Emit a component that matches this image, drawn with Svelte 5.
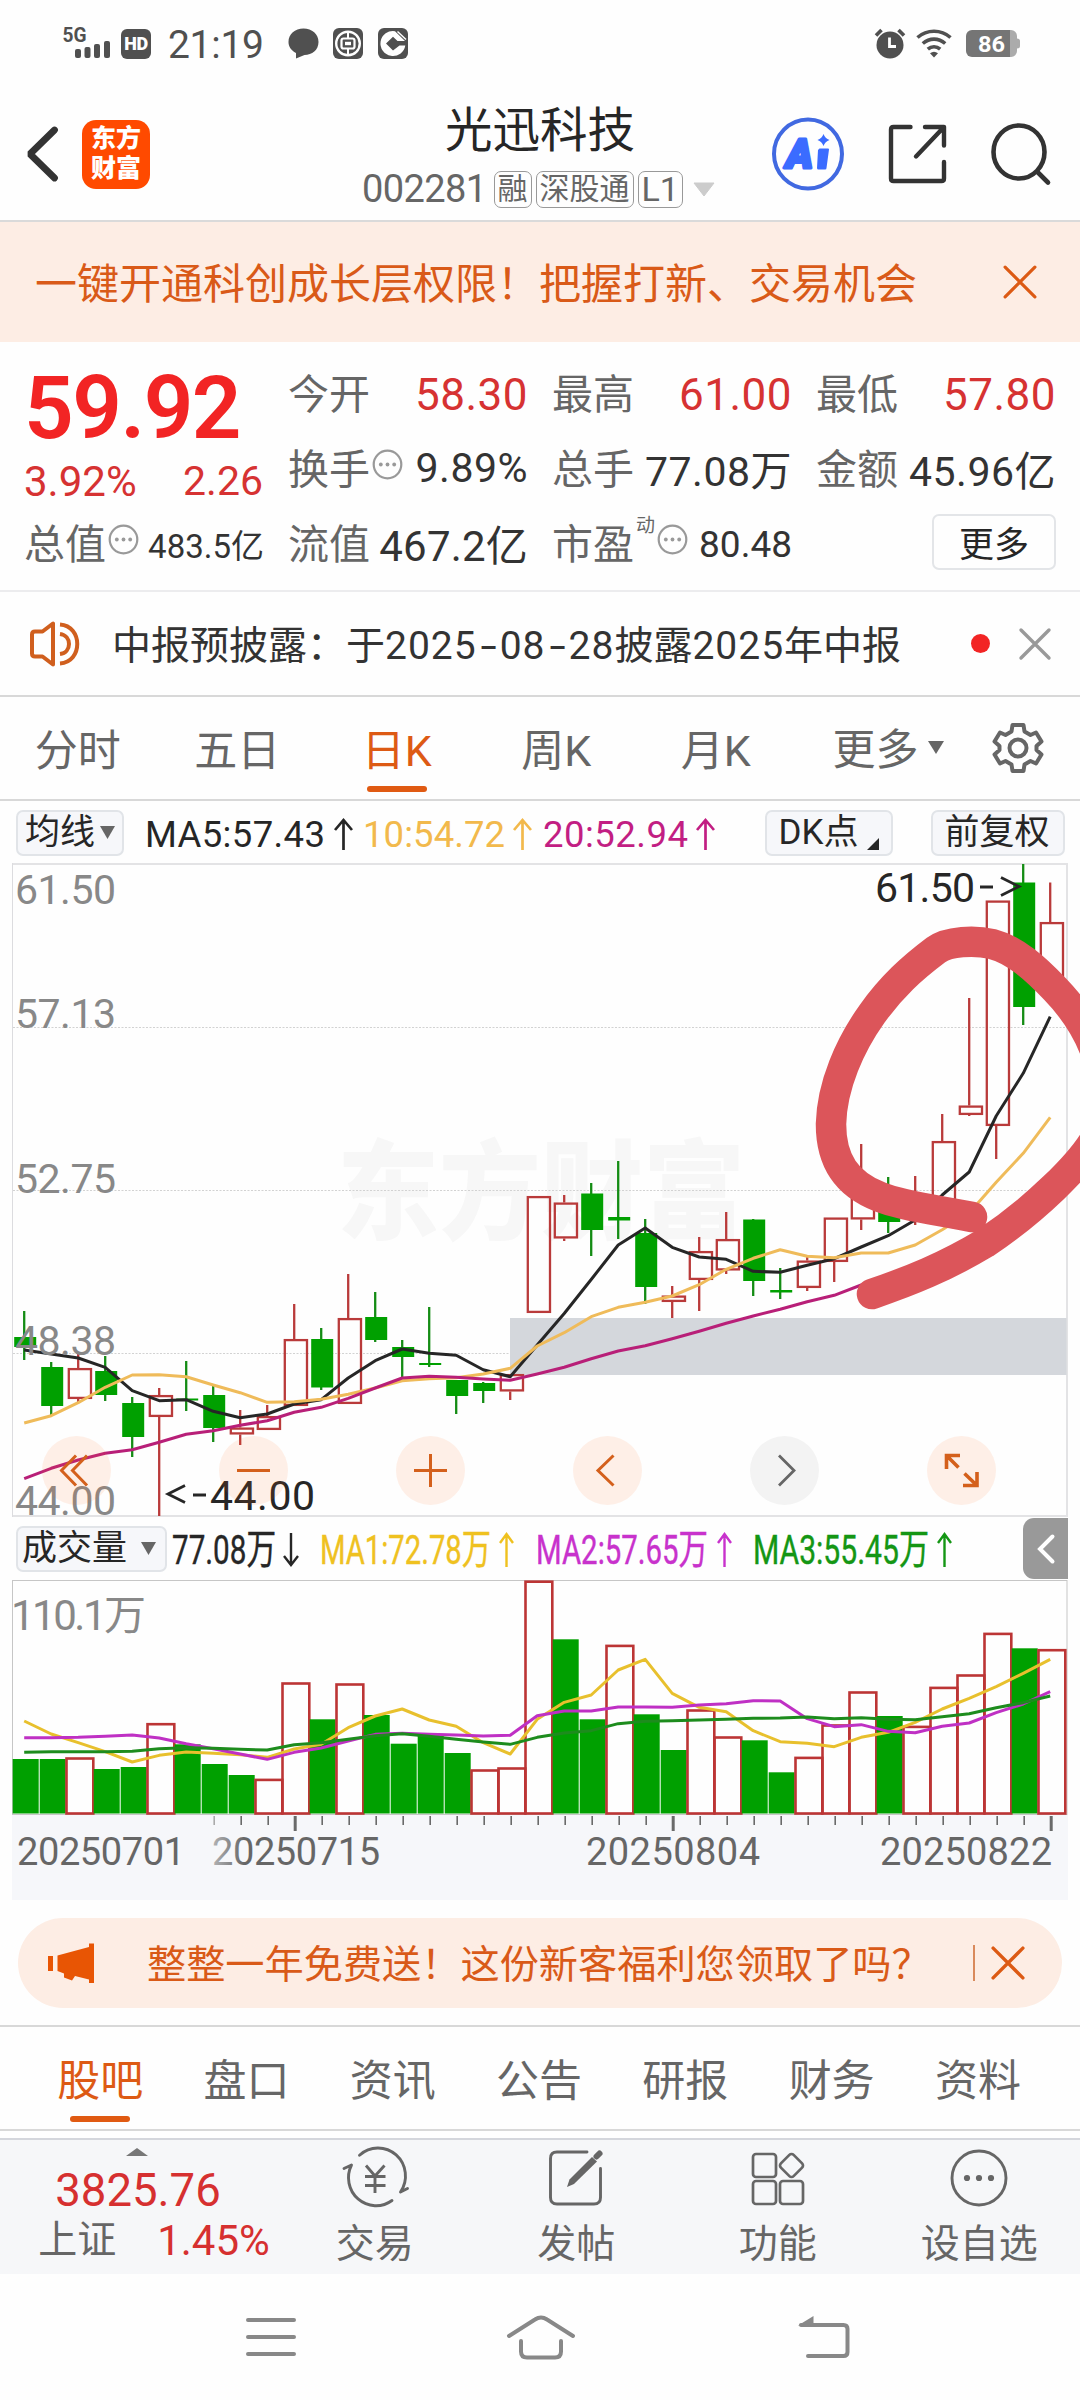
<script>
  const STEP = 27;
  const cx = (i) => 24.2 + i * STEP;

  // [rising, high, low, bodyTop, bodyBottom] in chart units
  const candles = [
    [0, 1311, 1360, 1337, 1347], [0, 1362, 1415, 1367, 1406], [1, 1353, 1402, 1368, 1399],
    [0, 1356, 1401, 1371, 1395], [0, 1397, 1457, 1403, 1437], [1, 1388, 1516, 1395, 1417],
    [0, 1361, 1411, 1398.5, 1400.5], [0, 1385, 1442, 1395, 1428], [1, 1410, 1445, 1427.5, 1434.5],
    [1, 1405, 1429, 1416, 1430], [1, 1304, 1406, 1339, 1406], [0, 1328, 1390, 1339, 1387.5],
    [1, 1274, 1404, 1318, 1404], [0, 1292, 1342, 1317, 1340], [0, 1340, 1378, 1347, 1357],
    [0, 1307, 1367, 1363, 1365], [0, 1380, 1414, 1380, 1396], [0, 1382, 1403, 1383, 1391],
    [1, 1374, 1400, 1374, 1391.5], [1, 1196, 1313, 1196, 1313], [1, 1195, 1241, 1202.5, 1238.5],
    [0, 1183, 1256, 1193.5, 1230], [0, 1161, 1239, 1217, 1220.5], [0, 1219, 1304, 1233, 1287],
    [1, 1286, 1318, 1295.5, 1302], [1, 1237, 1311, 1251, 1280], [1, 1212, 1274, 1239, 1270.5],
    [0, 1219, 1296, 1219.5, 1281], [0, 1268, 1299, 1290, 1292.5], [1, 1257, 1291, 1260.5, 1288],
    [1, 1217.5, 1282, 1217.5, 1262], [1, 1144, 1230, 1196, 1219.5], [0, 1177, 1233, 1205, 1222],
    [1, 1176, 1225, 1198, 1212], [1, 1114, 1201, 1141, 1201], [1, 998, 1116, 1105.5, 1115],
    [1, 900.5, 1159, 900.5, 1126], [0, 864, 1025, 882.5, 1007], [1, 882.5, 987, 922, 987]
  ];

  const ma5 = [1350, 1354, 1358, 1367.3, 1390.7, 1400.7, 1399.7, 1411.3, 1417.7, 1414, 1404, 1399.7, 1378, 1360.7, 1349, 1353.3, 1355.3, 1369.7, 1376.7, 1345, 1313.5, 1279.5, 1245, 1228, 1247.3, 1257, 1259.3, 1271.3, 1272.3, 1265.3, 1258.7, 1247, 1235.7, 1220, 1195, 1172, 1116, 1073.3, 1016.7];
  const ma10 = [1423, 1415.7, 1402.7, 1387.3, 1375, 1374.7, 1376.7, 1385, 1392.7, 1402.3, 1401.7, 1399.3, 1394.3, 1388, 1380.7, 1378.7, 1377.7, 1374, 1368.3, 1346, 1332.7, 1316.7, 1307.3, 1302.3, 1296, 1284.7, 1269.3, 1258.3, 1249.7, 1256.3, 1257.7, 1253, 1253, 1245, 1229.7, 1213, 1182.3, 1153.3, 1117.3];
  const ma20 = [1478.7, 1468.3, 1460, 1453.3, 1449.7, 1442.3, 1434.3, 1430.7, 1425.3, 1420.7, 1412.3, 1407.3, 1398.3, 1388, 1378, 1376.3, 1377.3, 1379, 1380.3, 1374, 1367.3, 1358.7, 1351, 1345.7, 1338.7, 1331.3, 1323.3, 1316, 1309.3, 1301.7, 1295.3, 1285, 1277];

  // [rising, top]
  const volumes = [
    [0, 1759], [0, 1759], [1, 1757.3], [0, 1769], [0, 1767], [1, 1723], [0, 1744.3], [0, 1764], [0, 1775], [1, 1778.7],
    [1, 1682.3], [0, 1719.3], [1, 1683.3], [0, 1715], [0, 1743.7], [0, 1736], [0, 1753], [1, 1769.3], [1, 1767.3], [1, 1580.5],
    [0, 1639.3], [0, 1719.3], [1, 1644.7], [0, 1714.3], [0, 1750], [1, 1709.3], [1, 1736.3], [0, 1740.3], [0, 1772.3], [1, 1756.7],
    [1, 1724.3], [1, 1691.3], [0, 1716], [1, 1725.7], [1, 1686.7], [1, 1674.3], [1, 1632.7], [0, 1648.3], [1, 1649]
  ];
  const vma = (offsets) => offsets.map((o) => 1560 + o / 3);
  const v1 = vma([483, 522, 548, 575, 606, 586, 576, 580, 584, 592, 567, 553, 503, 468, 447, 480, 499, 548, 582, 478, 427, 405, 330, 298, 400, 442, 455, 512, 545, 550, 560, 532, 517, 487, 447, 415, 380, 340, 298]);
  const v2 = vma([533, 533, 532, 529, 525, 534, 551, 566, 582, 598, 577, 564, 543, 523, 520, 523, 525, 528, 526, 467, 453, 453, 441, 441, 442, 435, 431, 422, 423, 476, 500, 494, 514, 518, 499, 489, 458, 432, 395]);
  const v3 = vma([577, 575, 575, 575, 574, 566, 563, 565, 568, 570, 554, 548, 538, 527, 521, 529, 538, 546, 553, 532, 519, 512, 491, 484, 482, 480, 478, 475, 474, 471, 476, 473, 478, 479, 470, 461, 443, 428, 408]);

  const line = (ys) => ys.map((y, i) => `${cx(i)},${y}`).join(' ');

  const periodTabs = ['分时', '五日', '日K', '周K', '月K'];
  const infoTabs = ['股吧', '盘口', '资讯', '公告', '研报', '财务', '资料'];
  const priceLabels = [['61.50', 903.5], ['57.13', 1028], ['52.75', 1192.5], ['48.38', 1355], ['44.00', 1514.5]];
  const gridYs = [1027.5, 1190.5, 1353.5];
  const ticks = Array.from({ length: 32 }, (_, k) => k + 7);
  const bigTicks = [10, 24, 38];
  const priceLegend = [
    ['MA5:57.43', 145, 180, 335, '#262626'],
    ['10:54.72', 363, 142, 514, '#f2b94c'],
    ['20:52.94', 543, 145, 697, '#c21e83']
  ];
  const volumeLegend = [
    ['77.08万', 172, 104, 284, '#262626', true],
    ['MA1:72.78万', 320, 171, 500, '#efc11f', false],
    ['MA2:57.65万', 536, 172, 718, '#c832cc', false],
    ['MA3:55.45万', 753, 176, 938, '#149614', false]
  ];
</script>

{#snippet dots()}
  <svg class="dots" width="31" height="31" viewBox="0 0 31 31">
    <circle cx="15.5" cy="15.5" r="13.8" fill="none" stroke="#999" stroke-width="2.2" />
    <circle cx="8.8" cy="15.5" r="1.9" fill="#999" /><circle cx="15.5" cy="15.5" r="1.9" fill="#999" /><circle cx="22.2" cy="15.5" r="1.9" fill="#999" />
  </svg>
{/snippet}

{#snippet cross(size, color, w)}
  <svg width={size} height={size} viewBox="0 0 32 32">
    <path d="M2 2 30 30M30 2 2 30" stroke={color} stroke-width={w} fill="none" stroke-linecap="round" />
  </svg>
{/snippet}

<div class="screen">
  <div class="status">
    <svg class="signal" width="50" height="44" viewBox="62 20 50 44">
      <text x="62.5" y="41.5" font-size="19.5" font-weight="700" fill="#505050" textLength="24" lengthAdjust="spacingAndGlyphs">5G</text>
      <g fill="#505050">
        <rect x="75" y="49" width="6" height="9" rx="2" /><rect x="84.5" y="47" width="6" height="11" rx="2" />
        <rect x="94" y="44" width="6" height="14" rx="2" /><rect x="104" y="41" width="6" height="17" rx="2" />
      </g>
    </svg>
    <span class="hd">HD</span>
    <span class="clock">21:19</span>
    <svg class="chat" width="31" height="31" viewBox="0 0 31 31">
      <path d="M15.5 .5C24 .5 30.500 6 30.500 14S24 27 16.500 27L8 30.500V25C3 22.500.5 18.500.5 14 .5 6 7 .5 15.500.5Z" fill="#505050" />
    </svg>
    <svg class="bank" width="30" height="31" viewBox="0 0 30 31">
      <rect width="30" height="31" rx="6" fill="#505050" />
      <circle cx="15" cy="15.500" r="11.800" fill="none" stroke="#fff" stroke-width="2.400" />
      <rect x="8.500" y="10.500" width="13" height="10" rx="2" fill="none" stroke="#fff" stroke-width="2.200" />
      <path d="M15 4v6.500M15 20.500V27" stroke="#fff" stroke-width="2" />
      <rect x="12" y="13.800" width="6" height="3.400" fill="#fff" />
    </svg>
    <svg width="30" height="31" viewBox="0 0 30 31">
      <rect width="30" height="31" rx="6" fill="#505050" />
      <path d="M17 3.200A12.500 12.500 0 1 0 27.300 17.500H21.500L15 22.500 8 15.500 15 8.800 19.500 13H27L17 3.200Z" fill="#fff" />
      <path d="M19.500 3.500 28 11.500" stroke="#fff" stroke-width="1.500" />
    </svg>
    <div class="status-right">
      <svg width="30" height="31" viewBox="0 0 30 31">
        <circle cx="15" cy="17" r="13.500" fill="#505050" />
        <path d="M1 7.500 6.500 2M29 7.500 23.500 2" stroke="#505050" stroke-width="3.600" />
        <path d="M14.500 9.500v9H21" fill="none" stroke="#fff" stroke-width="2.800" />
      </svg>
      <svg width="36" height="29" viewBox="0 0 36 29" fill="none" stroke="#505050" stroke-width="3.600">
        <path d="M1.500 8.500C11 .2 25 .2 34.500 8.500" /><path d="M6.800 14.500C13.500 8.700 22.500 8.700 29.200 14.500" /><path d="M11.800 20.200C15.500 17 20.500 17 24.200 20.200" />
        <path d="M14 24.200q4-3 8 0l-4 4.300Z" fill="#505050" stroke="none" />
      </svg>
      <svg width="54" height="27" viewBox="0 0 54 27">
        <path d="M40 0h5a6 6 0 0 1 6 6v2.500q3 0 3 2.500v5q0 2.500-3 2.500V21a6 6 0 0 1-6 6h-5Z" fill="#ababab" />
        <path d="M6 0H44V27H6a6 6 0 0 1-6-6V6A6 6 0 0 1 6 0Z" fill="#757575" />
        <text x="12" y="21.500" font-size="22" font-weight="700" fill="#fff" textLength="27" lengthAdjust="spacingAndGlyphs">86</text>
      </svg>
    </div>
  </div>

  <header>
    <div class="head-left">
      <svg width="33" height="56" viewBox="0 0 33 56"><path d="M28.500 4 4 28 28.500 52" fill="none" stroke="#333" stroke-width="6.800" stroke-linecap="round" stroke-linejoin="bevel" /></svg>
      <div class="logo"><span>东方</span><span>财富</span></div>
    </div>
    <div class="head-mid">
      <h1>光迅科技</h1>
      <div class="sub">
        <span class="code">002281</span><span class="tag">融</span><span class="tag">深股通</span><span class="tag l1">L1</span>
        <svg width="22" height="15" viewBox="0 0 22 15"><path d="M1 1H21L11 14Z" fill="#ccc" stroke="#ccc" stroke-linejoin="round" /></svg>
      </div>
    </div>
    <div class="head-right">
      <svg width="72" height="74" viewBox="0 0 72 74">
        <ellipse cx="36" cy="37" rx="34" ry="34.500" fill="none" stroke="#4169e1" stroke-width="4" />
        <text x="14" y="50.500" font-size="41" font-weight="900" font-style="italic" fill="#3b6cff" stroke="#3b6cff" stroke-width="3" stroke-linejoin="round" textLength="27" lengthAdjust="spacingAndGlyphs">A</text>
        <path d="M47.500 31.500h8.500q1 0 1 1L54.500 51q0 1.500-1.500 1.500h-6.500q-1.500 0-1.500-1.500L46 33Z" fill="#3b6cff" />
        <path d="M51.500 17q1.600 4.400 6 6-4.400 1.600-6 6-1.600-4.400-6-6 4.400-1.600 6-6Z" fill="#3b6cff" />
      </svg>
      <svg width="59" height="60" viewBox="0 0 59 60" fill="none" stroke="#333" stroke-width="4.400" stroke-linecap="round" stroke-linejoin="round">
        <path d="M22.500 3H5.500Q3 3 3 5.500V54.500Q3 57 5.500 57H53.500Q56 57 56 54.500V38" /><path d="M37 3H56V21.500M56 3 28 32.500" />
      </svg>
      <svg width="60" height="62" viewBox="0 0 60 62" fill="none" stroke="#333" stroke-width="4.600" stroke-linecap="round">
        <ellipse cx="28" cy="29" rx="25.500" ry="26.500" /><path d="M46.500 49 57 59.500" />
      </svg>
    </div>
  </header>

  <div class="banner">
    <span>一键开通科创成长层权限！把握打新、交易机会</span>
    {@render cross(34, '#dc5a14', 3)}
  </div>

  <section class="quote">
    <div class="col first">
      <div class="price">59.92</div>
      <div class="change"><span>3.92%</span><span class="diff">2.26</span></div>
      <div class="cell"><span class="label">总值</span>{@render dots()}<b class="v33">483.5亿</b></div>
    </div>
    <div class="col">
      <div class="cell"><span class="label">今开</span><b class="red">58.30</b></div>
      <div class="cell"><span class="label">换手</span>{@render dots()}<b>9.89%</b></div>
      <div class="cell"><span class="label">流值</span><b class="v42">467.2亿</b></div>
    </div>
    <div class="col">
      <div class="cell"><span class="label">最高</span><b class="red">61.00</b></div>
      <div class="cell"><span class="label">总手</span><b>77.08万</b></div>
      <div class="cell"><span class="label">市盈</span><i>动</i>{@render dots()}<b class="v37">80.48</b></div>
    </div>
    <div class="col">
      <div class="cell"><span class="label">最低</span><b class="red">57.80</b></div>
      <div class="cell"><span class="label">金额</span><b>45.96亿</b></div>
      <div class="cell"><button class="more">更多</button></div>
    </div>
  </section>

  <div class="notice">
    <svg width="52" height="46" viewBox="0 0 52 46" fill="none" stroke="#d05f1e" stroke-width="4" stroke-linejoin="round">
      <path d="M24 2.500V43.500L13.500 35.500H6Q3 35.500 3 32.500V13.500Q3 10.500 6 10.500H13.500Z" />
      <path d="M31 3.500C54 5 54 41 31 42.500M31 13C43 14.500 43 31.500 31 33" />
    </svg>
    <span class="msg">中报预披露：于<em>2025</em><s>-</s><em>08</em><s>-</s><em>28</em>披露<em>2025</em>年中报</span>
    <span class="dot"></span>
    {@render cross(32, '#999', 3.4)}
  </div>

  <nav class="periods">
    {#each periodTabs as tab, i}
      <span class="tab" class:active={i === 2}>{tab}</span>
    {/each}
    <span class="drop">更多<svg width="16" height="13" viewBox="0 0 16 13"><path d="M0 0H16L8 13Z" fill="#666" /></svg></span>
    <svg class="gear" width="52" height="52" viewBox="0 0 52 52" fill="none" stroke="#666" stroke-width="4">
      <path stroke-linejoin="round" d="M20.500 3H31.500L32.500 9.500 38.500 13 44 10.500 49.500 19.500 44.500 24V28L49.500 32.500 44 41.500 38.500 39 32.500 42.500 31.500 49H20.500L19.500 42.500 13.500 39 8 41.500 2.500 32.500 7.500 28V24L2.500 19.500 8 10.500 13.500 13 19.500 9.500Z" />
      <circle cx="26" cy="26" r="8.500" />
    </svg>
  </nav>

  <div class="legend">
    <button class="chip ma">均线<svg width="15" height="13" viewBox="0 0 15 13"><path d="M0 0H15L7.500 13Z" fill="#666" /></svg></button>
    <svg width="606" height="62" viewBox="124 801 606 62">
      {#each priceLegend as [text, x, w, ax, color]}
        <text {x} y="845.500" font-size="36.500" fill={color} textLength={w}>{text}</text>
        <path d="M{ax + 8.500} 849V819M{ax} 829 {ax + 8.500} 819 {ax + 17} 829" fill="none" stroke={color} stroke-width="2.700" />
      {/each}
    </svg>
    <button class="chip dk">DK点<svg width="12" height="12" viewBox="0 0 12 12"><path d="M12 0V12H0Z" fill="#262626" /></svg></button>
    <button class="chip fq">前复权</button>
  </div>

  <svg class="chart" width="1080" height="654" viewBox="0 863 1080 654">
    <text x="337" y="1231" font-size="108" font-weight="900" fill="#f7f7f7" textLength="408" lengthAdjust="spacingAndGlyphs">东方财富</text>
    {#each gridYs as y}
      <path d="M13 {y}H1067" stroke="#d2d2d2" stroke-width="1" stroke-dasharray="2 1.500" />
    {/each}
    <path d="M12 864H1067V1516H12" fill="none" stroke="#e3e3e5" stroke-width="2" /><path d="M12.500 863V1517" stroke="#dcdcdf" stroke-width="1" />
    <rect x="510" y="1318" width="556.500" height="57" fill="#d4d7dc" />
    {#each candles as [up, high, low, top, bottom], i}
      {#if up}
        <path d="M{cx(i)} {high}V{top}M{cx(i)} {bottom}V{low}" stroke="#b93a3a" stroke-width="2.300" />
        <rect x={cx(i) - 9.400} y={top + 1.100} width="22.200" height={bottom - top - 2.200} fill="none" stroke="#b93a3a" stroke-width="2.300" />
      {:else}
        <path d="M{cx(i)} {high}V{low}" stroke="#148c14" stroke-width="2.300" />
        <rect x={cx(i) - 10} y={top} width="22" height={bottom - top} fill="#00a000" />
      {/if}
    {/each}
    <g fill="none" stroke-width="3" stroke-linejoin="round">
      <polyline points={line(ma5)} stroke="#262626" />
      <polyline points={line(ma10)} stroke="#efbb5a" />
      <polyline points={line(ma20)} stroke="#b81f78" />
    </g>
    {#each priceLabels as [label, y]}
      <text x="15" {y} font-size="41" fill="#888" textLength="101">{label}</text>
    {/each}
    <text x="875" y="901.500" font-size="41" fill="#262626" textLength="100">61.50</text>
    <path d="M980 887H993" stroke="#262626" stroke-width="3" /><path d="M1001 877.500 1019 886.500 1001 895.500" stroke="#262626" stroke-width="2.800" fill="none" />
    <path d="M185 1485.500 168 1494 185 1502.500" stroke="#262626" stroke-width="2.800" fill="none" /><path d="M193 1495H206" stroke="#262626" stroke-width="3" />
    <text x="210" y="1509.500" font-size="41" fill="#262626" textLength="105">44.00</text>

    <g fill="#ff6a1e" fill-opacity=".1">
      <circle cx="76.500" cy="1470.500" r="34.500" /><circle cx="253.500" cy="1470.500" r="34.500" /><circle cx="430.500" cy="1470.500" r="34.500" />
      <circle cx="607.500" cy="1470.500" r="34.500" /><circle cx="961.500" cy="1470.500" r="34.500" />
    </g>
    <circle cx="784.500" cy="1470.500" r="34.500" fill="#f3f3f3" />
    <g fill="none" stroke="#d4601c" stroke-width="3">
      <path d="M76 1455.500 61.500 1470.500 76 1485.500M87 1455.500 72.500 1470.500 87 1485.500" />
      <path d="M237 1470.500H270M414 1470.500H447M430.500 1454V1487" />
      <path d="M613.500 1455.500 598 1470.500 613.500 1485.500" />
      <path d="M960 1455.500H946.500V1469M946.500 1455.500 958.500 1467.500M977 1472V1485.500H963M977 1485.500 964.500 1473.500" stroke-width="3.600" />
    </g>
    <path d="M779 1455.500 794 1470.500 779 1485.500" fill="none" stroke="#666" stroke-width="2.800" />

    <path d="M972 1217C945 1211 905 1207 880 1197C846 1184 831 1160 831 1124C832 1085 850 1045 872 1014C892 986 912 968 936 950C948 941 975 940 992 944C1015 950 1035 968 1055 989C1085 1020 1115 1070 1100 1130C1085 1163 1030 1213 985 1243C945 1267 910 1281 872 1294" fill="none" stroke="#dc555a" stroke-width="30.500" stroke-linecap="round" stroke-linejoin="round" />
  </svg>

  <div class="vlegend">
    <button class="chip vol">成交量<svg width="15" height="13" viewBox="0 0 15 13"><path d="M0 0H15L7.500 13Z" fill="#666" /></svg></button>
    <svg width="856" height="63" viewBox="167 1517 856 63">
      {#each volumeLegend as [text, x, w, ax, color, down]}
        <text {x} y="1563.500" font-size="40.500" fill={color} stroke={color} stroke-width=".4" textLength={w} lengthAdjust="spacingAndGlyphs">{text}</text>
        {#if down}
          <path d="M{ax + 7} 1533V1565M{ax} 1556 {ax + 7} 1565 {ax + 14} 1556" fill="none" stroke={color} stroke-width="2.400" />
        {:else}
          <path d="M{ax + 6.500} 1567V1534M{ax} 1543 {ax + 6.500} 1534 {ax + 13} 1543" fill="none" stroke={color} stroke-width="2.400" />
        {/if}
      {/each}
    </svg>
    <div class="handle"><svg width="18" height="30" viewBox="0 0 18 30"><path d="M15.500 2.500 3 15 15.500 27.500" fill="none" stroke="#fff" stroke-width="4" stroke-linecap="round" /></svg></div>
  </div>

  <svg class="chart" width="1080" height="320" viewBox="0 1580 1080 320">
    <defs>
      <linearGradient id="fade" gradientUnits="userSpaceOnUse" x1="208" y1="0" x2="245" y2="0">
        <stop offset="0" stop-color="#666" stop-opacity=".4" /><stop offset="1" stop-color="#666" />
      </linearGradient>
    </defs>
    <rect x="12.500" y="1580.500" width="1054.500" height="234" fill="none" stroke="#c6c6c6" />
    <text x="11" y="1630" font-size="42" fill="#888" textLength="135">110.1万</text>
    {#each volumes as [up, top], i}
      {#if up}
        <rect x={12.500 + i * STEP} y={top + 1.200} width="26.800" height={1812.300 - top} fill="none" stroke="#bc3535" stroke-width="2.600" />
      {:else}
        <rect x={12.700 + i * STEP} y={top} width="26" height={1813.500 - top} fill="#00a000" />
      {/if}
    {/each}
    <g fill="none" stroke-width="3" stroke-linejoin="round">
      <polyline points={line(v1)} stroke="#e8c02d" /><polyline points={line(v2)} stroke="#bf30c4" /><polyline points={line(v3)} stroke="#1d8c1d" />
    </g>
    <rect x="12" y="1815" width="1056" height="85" fill="#f6f7fa" />
    {#each ticks as t}
      <path d="M{25.200 + t * STEP} 1816V{bigTicks.includes(t) ? 1831 : 1825}" stroke={t === 7 ? '#aaa' : '#6a6a6a'} stroke-width={bigTicks.includes(t) ? 3 : 1.600} />
    {/each}
    <g font-size="38" fill="#666">
      <text x="17" y="1865" textLength="168">20250701</text>
      <text x="212" y="1865" textLength="168" fill="url(#fade)">20250715</text>
      <text x="586" y="1865" textLength="174">20250804</text>
      <text x="880" y="1865" textLength="172">20250822</text>
    </g>
  </svg>

  <div class="promo">
    <svg width="46" height="40" viewBox="0 0 46 40" fill="#e85504"><rect y="13" width="5" height="15" /><path d="M9.500 12.500 41 4V.5H46V40H41V36.500L27 33 24 37.500 16 34.500V30.500L9.500 28Z" /></svg>
    <span class="ptext">整整一年免费送！这份新客福利您领取了吗？</span>
    <span class="sep"></span>
    {@render cross(34, '#dc5a14', 3.2)}
  </div>

  <nav class="info">
    {#each infoTabs as tab, i}
      <span class="tab" class:active={i === 0}>{tab}</span>
    {/each}
  </nav>

  <footer>
    <div class="index">
      <svg width="22" height="8" viewBox="0 0 22 8"><path d="M0 8 11 0 22 8Z" fill="#777" /></svg>
      <div class="points">3825.76</div>
      <div class="idxrow"><span>上证</span><span class="pct">1.45%</span></div>
    </div>
    <div class="act">
      <svg width="66" height="60" viewBox="0 0 66 60" fill="none" stroke="#666" stroke-width="2.900" stroke-linecap="round" stroke-linejoin="round">
        <path d="M17.500 7.200A27.500 28 0 0 1 58.500 44L65.500 40.500" /><path d="M50 52.500A27.500 28 0 0 1 9.500 17L2 20.500" />
        <path d="M24 17.500 33 28 42.500 17.500M23 28.500H43.500M23 37.500H43.500M33 28V45" stroke-linecap="butt" />
      </svg>
      <span>交易</span>
    </div>
    <div class="act">
      <svg width="56" height="60" viewBox="0 0 56 60" fill="none" stroke="#666" stroke-width="2.900">
        <path d="M39 4H9Q2.500 4 2.500 10.500V49.500Q2.500 56 9 56H46Q52.500 56 52.500 49.500V20.500" stroke-linecap="round" />
        <path d="M19 39 21.500 31.500 44 9 49 13.500 26 36Z" fill="#666" stroke="none" /><path d="M48.500 8.500 51.500 5.500" stroke-width="6" stroke-linecap="round" />
      </svg>
      <span>发帖</span>
    </div>
    <div class="act">
      <svg width="56" height="60" viewBox="0 0 56 60" fill="none" stroke="#666" stroke-width="2.700">
        <rect x="3" y="6" width="23" height="23" rx="3" /><rect x="3" y="33" width="23" height="23" rx="3" /><rect x="30" y="33" width="23" height="23" rx="3" />
        <rect x="32.500" y="8.500" width="18" height="18" rx="3" transform="rotate(45 41.500 17.500)" />
      </svg>
      <span>功能</span>
    </div>
    <div class="act">
      <svg width="58" height="60" viewBox="0 0 58 60"><circle cx="29" cy="30" r="27" fill="none" stroke="#666" stroke-width="2.900" /><circle cx="17" cy="30" r="3.100" fill="#666" /><circle cx="29" cy="30" r="3.100" fill="#666" /><circle cx="41" cy="30" r="3.100" fill="#666" /></svg>
      <span>设自选</span>
    </div>
  </footer>

  <div class="sysnav">
    <svg width="50" height="40" viewBox="0 0 50 40"><path d="M2 3H48M2 20H48M2 37H48" stroke="#888" stroke-width="4" stroke-linecap="round" /></svg>
    <svg width="68" height="46" viewBox="0 0 68 46" fill="none" stroke="#888" stroke-width="4" stroke-linecap="round" stroke-linejoin="round">
      <path d="M2 22 28 5.500Q34 1.500 40 5.500L66 22" /><path d="M14 27V37.500Q14 43.500 20 43.500H48Q54 43.500 54 37.500V27" />
    </svg>
    <svg width="52" height="44" viewBox="0 0 52 44"><path d="M3 10H45.500Q49.500 10 49.500 14V37Q49.500 41 45.500 41H10" fill="none" stroke="#888" stroke-width="4" stroke-linecap="round" /><path d="M0 10.500 15.500 1V11Z" fill="#888" /></svg>
  </div>
</div>

<style>
  :global(body) { background: #fefefe; }
  .screen { width: 1080px; height: 2400px; overflow: hidden; background: #fefefe; color: #262626; font-family: Roboto, 'Noto Sans CJK SC', sans-serif; display: flex; flex-direction: column; }
  .screen * { box-sizing: border-box; }
  svg { display: block; flex: none; overflow: visible; }
  button { font-family: inherit; padding: 0; color: #262626; }
  span { white-space: nowrap; }

  .status { height: 88px; display: flex; align-items: center; padding: 0 60px 1px 62px; }
  .signal { margin-top: -3px; }
  .hd { width: 30px; height: 30px; margin-left: 9px; border-radius: 6px; background: #505050; color: #fff; font-size: 18px; font-weight: 900; line-height: 30px; text-align: center; letter-spacing: -.5px; }
  .clock { font-size: 39px; line-height: 44px; color: #505050; margin-left: 17px; width: 98px; margin-top: 2px; letter-spacing: -.3px; }
  .chat { margin-left: 22px; }
  .bank { margin: 0 15px 0 14px; }
  .status-right { margin-left: auto; display: flex; align-items: center; gap: 11px; }
  .status-right svg:last-child { margin-left: 3px; }

  header { height: 134px; border-bottom: 2px solid #dadada; display: grid; grid-template-columns: 300px 1fr 300px; }
  .head-left { display: flex; align-items: center; padding-left: 26px; gap: 23px; }
  .logo { width: 68px; height: 69px; border-radius: 14px; background: #ff4a00; color: #fff; font-size: 25px; font-weight: 900; line-height: 30px; display: flex; flex-direction: column; align-items: center; justify-content: center; }
  .head-mid { display: flex; flex-direction: column; align-items: center; padding-top: 14px; }
  h1 { margin: 0; font-size: 47.5px; line-height: 58px; font-weight: 400; }
  .sub { display: flex; align-items: center; height: 40px; margin-top: 9px; margin-left: -3px; color: #666; }
  .code { font-size: 38px; margin-right: 7px; letter-spacing: -.6px; }
  .tag { border: 1.5px solid #999; border-radius: 7px; height: 37px; line-height: 33px; font-size: 30px; padding: 0 3px; margin-right: 4px; }
  .l1 { font-size: 34px; line-height: 34px; margin-right: 10px; }
  .head-right { display: flex; align-items: center; justify-content: flex-end; padding-right: 29px; gap: 44px; }

  .banner { height: 120px; background: #fdede4; display: flex; align-items: center; justify-content: space-between; padding: 0 43px 0 35px; color: #d95a18; font-size: 42px; }
  .banner span { margin-top: -3px; }

  .quote { height: 250px; border-bottom: 2px solid #ececee; padding: 14px 25px 0; display: grid; grid-template-columns: repeat(4, 238px); column-gap: 26px; }
  .col { display: flex; flex-direction: column; }
  .cell { height: 75px; display: flex; align-items: center; }
  .label { font-size: 41px; color: #666; margin: -5px 0 0 -1px; }
  b { font-weight: 400; font-size: 41px; margin-left: auto; margin-top: -2px; margin-right: -1px; color: #333; white-space: nowrap; letter-spacing: .5px; }
  b.v33 { font-size: 33px; margin-top: 1px; letter-spacing: 0; }
  b.v42 { font-size: 42px; letter-spacing: .2px; }
  b.v37 { font-size: 37px; margin-top: 2px; letter-spacing: 0; }
  b.red { font-size: 44px; color: #d63232; margin-top: 2px; }
  .dots { margin: 0 0 9px 2px; }
  i { font-style: normal; font-size: 19px; color: #666; margin: 0 0 40px 2px; }
  .price { font-size: 87px; line-height: 102px; height: 102px; font-weight: 600; color: #f22424; letter-spacing: -1.500px; margin: 1px 0 0 -1px; }
  .change { height: 47px; line-height: 45px; font-size: 42px; color: #d63232; display: flex; justify-content: space-between; margin-left: -1px; }
  .diff { font-size: 41px; }
  .more { margin-left: auto; margin-right: -1px; margin-bottom: 4px; padding-bottom: 4px; width: 124px; height: 56px; border: 2px solid #e3e5e8; border-radius: 7px; background: #fefefe; font-size: 35px; }

  .notice { height: 105px; border-bottom: 2px solid #d8d8d8; display: flex; align-items: center; padding: 0 29px 0 29px; }
  .msg { width: 870px; padding-left: 31px; margin-top: -4px; font-size: 39px; color: #333; flex: none; }
  em { font-style: normal; letter-spacing: 1px; }
  s { text-decoration: none; display: inline-block; width: 23px; text-align: center; transform: scaleX(1.5); }
  .dot { width: 19px; height: 19px; flex: none; border-radius: 50%; background: #f22424; margin: 0 auto 0 20px; }

  .periods { height: 104px; border-bottom: 2px solid #d8d8d8; display: flex; align-items: center; font-size: 43px; color: #666; padding-right: 36px; }
  .periods .tab { width: 159.500px; margin-left: -2px; margin-right: 2px; flex: none; }
  .tab { height: 102px; line-height: 108px; text-align: center; display: flex; flex-direction: column; align-items: center; }
  .active { color: #dd5a14; }
  .active::after { content: ''; width: 60px; height: 6px; border-radius: 3px; background: #e05a12; margin-top: -19px; }
  .drop { display: flex; align-items: center; gap: 9px; margin-left: 35px; padding-top: 3px; line-height: 108px; }
  .drop svg { margin-bottom: 5px; }
  .gear { margin-left: auto; margin-bottom: 1px; }

  .legend { height: 62px; display: flex; align-items: center; padding-left: 16px; padding-top: 1px; }
  .chip { height: 46px; border: 2px solid #e1e4e8; border-radius: 7px; background: #f6f7fa; font-size: 35px; line-height: 42px; display: flex; align-items: center; justify-content: center; white-space: nowrap; flex: none; }
  .ma { width: 108px; gap: 5px; }
  .dk { width: 128px; margin-left: 35px; gap: 9px; }
  .dk svg { align-self: flex-end; margin-bottom: 4px; }
  .fq { width: 134px; margin-left: 38px; padding-right: 2px; }
  .chart { flex: none; }
  .vlegend { height: 63px; display: flex; align-items: center; padding-left: 16px; }
  .vol { width: 151px; gap: 14px; padding-right: 5px; }
  .handle { width: 45px; height: 61px; background: #999; border-radius: 11px 0 0 11px; display: flex; align-items: center; justify-content: center; }

  .promo { height: 90px; flex: none; margin: 18px 18px 17px; border-radius: 45px; background: #fdede4; display: flex; align-items: center; padding: 0 37px 0 30px; color: #d95a18; }
  .ptext { width: 828px; margin: -4px 0 0 53px; font-size: 39.200px; }
  .sep { width: 2px; height: 36px; background: #d98a5c; margin-right: 16px; }

  .info { height: 106px; flex: none; border-top: 2px solid #d8d8d8; border-bottom: 2px solid #d8d8d8; display: grid; grid-template-columns: repeat(7, 146.300px); padding-left: 27px; font-size: 43px; color: #666; }

  footer { height: 136px; flex: none; margin-top: 7px; border-top: 2px solid #d4d6dc; background: #f6f7f9; display: grid; grid-template-columns: 274px repeat(4, 201.500px); color: #666; }
  .index { display: flex; flex-direction: column; align-items: center; padding-top: 8px; }
  .points { font-size: 45.500px; line-height: 54px; color: #d63030; margin-top: 8px; margin-left: 2px; }
  .idxrow { display: flex; align-items: center; gap: 41px; font-size: 39px; line-height: 46px; margin-left: 34px; margin-top: -2px; }
  .pct { font-size: 42px; color: #d63030; margin-top: 2px; }
  .act { display: flex; flex-direction: column; align-items: center; padding-top: 8px; font-size: 39px; line-height: 50px; }
  .act span { margin-top: 11px; }

  .sysnav { height: 126px; flex: none; display: flex; justify-content: center; align-items: center; padding-left: 15px; }
  .sysnav svg:nth-child(2) { margin: 0 223px 0 211px; }
</style>
